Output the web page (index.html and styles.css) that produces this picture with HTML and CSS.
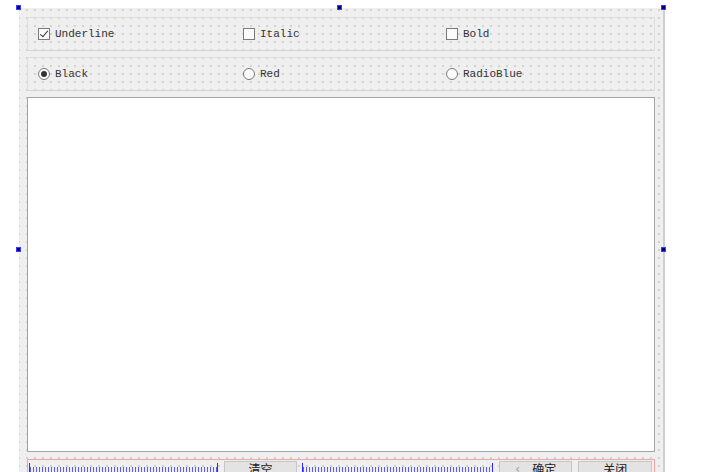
FILE: index.html
```html
<!DOCTYPE html>
<html lang="zh">
<head>
  <meta charset="UTF-8">
  <meta name="viewport" content="width=device-width, initial-scale=1.0">
  <title>Dialog</title>
  <link rel="stylesheet" href="styles.css">
</head>
<body>
  <div class="form">
    <div class="row">
      <label class="item"><span class="check checked"></span>Underline</label>
      <label class="item"><span class="check"></span>Italic</label>
      <label class="item"><span class="check"></span>Bold</label>
    </div>
    <div class="row">
      <label class="item"><span class="radio checked"></span>Black</label>
      <label class="item"><span class="radio"></span>Red</label>
      <label class="item"><span class="radio"></span>RadioBlue</label>
    </div>
    <div class="editor"></div>
    <div class="buttons">
      <div class="spacer first"></div>
      <button class="btn">清空</button>
      <div class="spacer second"></div>
      <button class="btn"><span class="arrow">‹</span>确定</button>
      <button class="btn">关闭</button>
    </div>

    <span class="handle h-tl"></span>
    <span class="handle h-tm"></span>
    <span class="handle h-tr"></span>
    <span class="handle h-ml"></span>
    <span class="handle h-mr"></span>
  </div>
</body>
</html>
```

FILE: styles.css
```css
body {
  margin: 0;
  background: #fff;
  overflow: hidden;
  font-family: "Liberation Mono", "DejaVu Sans Mono", monospace;
}
.form {
  position: relative;
  margin: 8px 0 0 19px;
  width: 646px;
  height: 480px;
  box-sizing: border-box;
  padding: 9px 8px 0 8px;
  background-color: #efefef;
  background-image: radial-gradient(circle, #c2c2c2 0.6px, transparent 0.9px);
  background-size: 8px 8px;
  background-position: -4px -2px;
  border-right: 2px solid #cfcfcf;
}
.row {
  display: grid;
  grid-template-columns: 205px 203px 1fr;
  align-items: center;
  height: 34px;
  box-sizing: border-box;
  padding-left: 10px;
  margin-bottom: 6px;
  border: 1px solid #dedede;
  border-bottom-color: #d4d4d4;
}
.item {
  display: flex;
  align-items: center;
  gap: 5px;
  font-size: 11px;
  color: #333;
}
.check, .radio {
  width: 12px;
  height: 12px;
  box-sizing: border-box;
  border: 1px solid #7a7a7a;
  background: #fbfbfb;
  position: relative;
}
.radio {
  border-radius: 50%;
}
.check.checked::after {
  content: "";
  position: absolute;
  left: 3px;
  top: 0px;
  width: 3px;
  height: 7px;
  border: solid #333;
  border-width: 0 1px 1px 0;
  transform: rotate(40deg);
}
.radio.checked::after {
  content: "";
  position: absolute;
  left: 2px;
  top: 2px;
  width: 6px;
  height: 6px;
  border-radius: 50%;
  background: #333;
}
.editor {
  height: 355px;
  box-sizing: border-box;
  background: #fff;
  border: 1px solid #a4a4a4;
}
.buttons {
  display: flex;
  margin-top: 7px;
  height: 30px;
  border-top: 1px solid #f2a3a3;
  border-left: 1px solid #f2a3a3;
  border-right: 1px solid #f2a3a3;
  padding: 1px 2px 0 1px;
  gap: 6px;
}
.spacer {
  height: 10px;
  margin-top: 2px;
  border-left: 1px solid #2a2aff;
  border-right: 1px solid #2a2aff;
  background-image: repeating-linear-gradient(90deg, #5a5aff 0 1px, transparent 1px 3px);
  background-size: 100% 5px;
  background-repeat: no-repeat;
  background-position: 0 4px;
}
.spacer.first {
  width: 188px;
}
.spacer.second {
  width: 190px;
  margin-left: -1px;
}
.btn {
  width: 74px;
  height: 24px;
  padding: 0;
  display: flex;
  justify-content: center;
  align-items: flex-start;
  font-family: "Noto Sans CJK SC", sans-serif;
  font-size: 12px;
  color: #222;
  background: #e3e3e3;
  border: 1px solid #c6c6c6;
  line-height: 14px;
}
.arrow {
  color: #999;
  margin-right: 12px;
  font-family: "DejaVu Sans", sans-serif;
}
.handle {
  position: absolute;
  width: 3px;
  height: 3px;
  background: #00006e;
  border: 1px solid #3b3bff;
}
.h-tl { left: -3px; top: -3px; }
.h-tm { left: 318px; top: -3px; }
.h-tr { left: 642px; top: -3px; }
.h-ml { left: -3px; top: 239px; }
.h-mr { left: 642px; top: 239px; }
```
